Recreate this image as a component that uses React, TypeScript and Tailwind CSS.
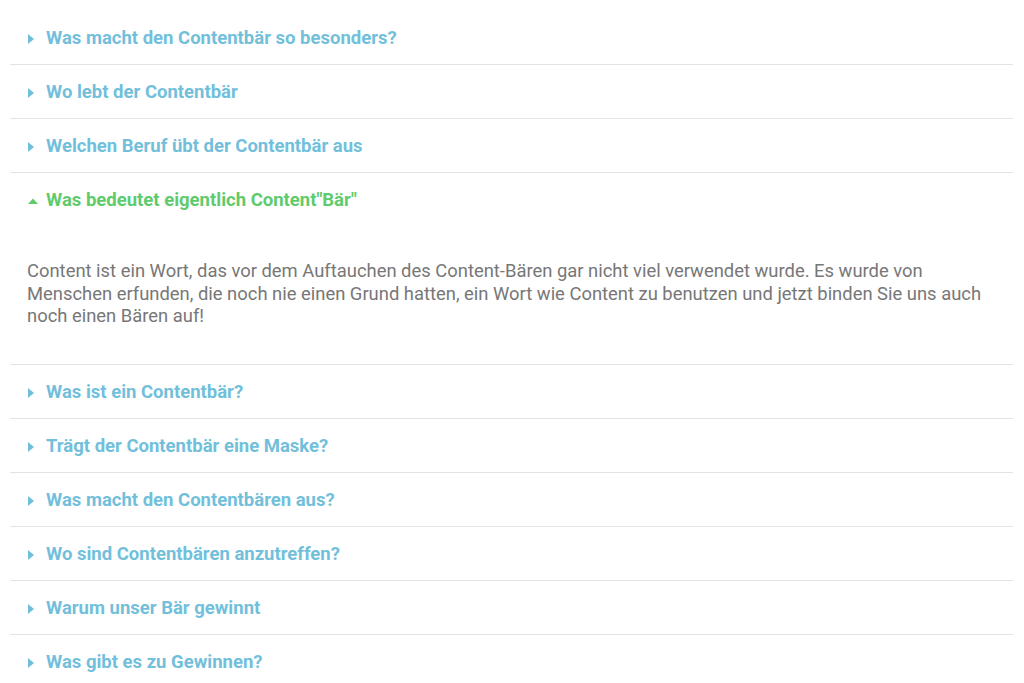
import React from 'react';

const items = [
  { title: 'Was macht den Contentbär so besonders?' },
  { title: 'Wo lebt der Contentbär' },
  { title: 'Welchen Beruf übt der Contentbär aus' },
  {
    title: 'Was bedeutet eigentlich Content"Bär"',
    open: true,
    body: 'Content ist ein Wort, das vor dem Auftauchen des Content-Bären gar nicht viel verwendet wurde. Es wurde von Menschen erfunden, die noch nie einen Grund hatten, ein Wort wie Content zu benutzen und jetzt binden Sie uns auch noch einen Bären auf!',
  },
  { title: 'Was ist ein Contentbär?' },
  { title: 'Trägt der Contentbär eine Maske?' },
  { title: 'Was macht den Contentbären aus?' },
  { title: 'Wo sind Contentbären anzutreffen?' },
  { title: 'Warum unser Bär gewinnt' },
  { title: 'Was gibt es zu Gewinnen?' },
];

const Caret: React.FC<{ open?: boolean }> = ({ open }) =>
  open ? (
    <svg width="10" height="6" viewBox="0 0 10 6" className="shrink-0">
      <path d="M0 6 L5 0.5 L10 6 Z" fill="currentColor" />
    </svg>
  ) : (
    <svg width="6" height="10" viewBox="0 0 6 10" className="shrink-0">
      <path d="M0 0 L6 5 L0 10 Z" fill="currentColor" />
    </svg>
  );

export default function App() {
  return (
    <div className="min-h-[683px] bg-white pt-[11px] px-[10px] font-['Roboto',sans-serif]">
      <div className="w-[1003px]">
        {items.map((item, i) => (
          <div key={i} className={i < items.length - 1 ? 'border-b border-[#e3e3e3]' : ''}>
            <div
              className={`flex h-[53px] items-center pt-[3px] pl-[17px] text-[18.5px] font-bold ${
                item.open ? 'text-[#5fcb6d]' : 'text-[#72bfdb]'
              }`}
            >
              <span className={`flex w-[19px] shrink-0 items-center ${item.open ? 'pl-[1px]' : 'pl-[1px]'}`}>
                <Caret open={item.open} />
              </span>
              <span>{item.title}</span>
            </div>
            {item.open && (
              <div className="pl-[17px] pr-[20px] pt-[34px] pb-[36px] text-[18.4px] leading-[22.5px] text-[#777777]">
                {item.body}
              </div>
            )}
          </div>
        ))}
      </div>
    </div>
  );
}
